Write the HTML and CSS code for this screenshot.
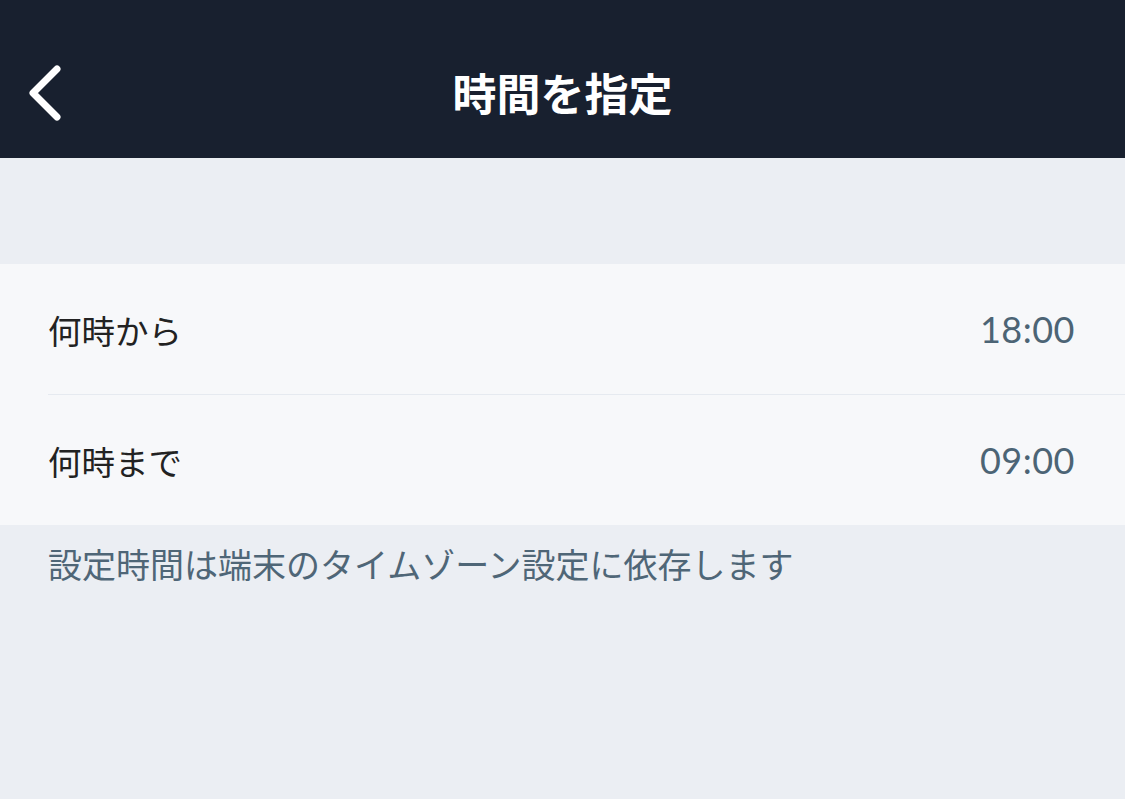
FILE: index.html
```html
<!DOCTYPE html>
<html lang="ja">
<head>
<meta charset="utf-8">
<link rel="stylesheet" href="styles.css">
</head>
<body>
<div class="app">
  <header class="nav">
    <button class="back" aria-label="戻る">
      <svg width="40" height="60" viewBox="0 0 40 60"><path d="M32 7 L8 31 L32 55" fill="none" stroke="#fff" stroke-width="7" stroke-linecap="round" stroke-linejoin="round"/></svg>
    </button>
    <h1 class="title">時間を指定</h1>
  </header>
  <div class="spacer"></div>
  <section class="list">
    <div class="row">
      <span class="label">何時から</span>
      <span class="value">18:00</span>
    </div>
    <div class="row">
      <span class="label">何時まで</span>
      <span class="value">09:00</span>
    </div>
  </section>
  <p class="note">設定時間は端末のタイムゾーン設定に依存します</p>
</div>
</body>
</html>
```
FILE: styles.css
```css
html, body {
  margin: 0;
  padding: 0;
  background: #ebeef3;
}
.app {
  width: 1125px;
  height: 799px;
  font-family: "Noto Sans CJK JP", "Noto Sans", sans-serif;
  background: #ebeef3;
  overflow: hidden;
}
.nav {
  height: 158px;
  background: #18202f;
  display: flex;
  align-items: center;
  justify-content: center;
  position: relative;
}
.back {
  position: absolute;
  left: 25px;
  top: 62px;
  background: none;
  border: 0;
  padding: 0;
  display: block;
}
.back svg { display: block; }
.title {
  margin: 0;
  color: #fff;
  font-size: 44px;
  font-weight: 700;
  letter-spacing: 0;
  line-height: 1;
  padding-top: 26px;
}
.spacer {
  height: 106px;
}
.list {
  background: #f7f8fa;
}
.row {
  height: 130px;
  display: flex;
  align-items: center;
  justify-content: space-between;
  margin-left: 48px;
  padding-right: 50px;
  border-bottom: 1px solid #e6eaf0;
}
.row:last-child { border-bottom: 0; }
.label {
  font-size: 33.5px;
  color: #222;
}
.value {
  font-size: 36px;
  color: #4c6475;
  font-family: "Lato", "Noto Sans", sans-serif;
  letter-spacing: 0.5px;
}
.note {
  margin: 17px 0 0 48px;
  font-size: 34px;
  color: #4f6677;
  line-height: 1.3;
}
```
